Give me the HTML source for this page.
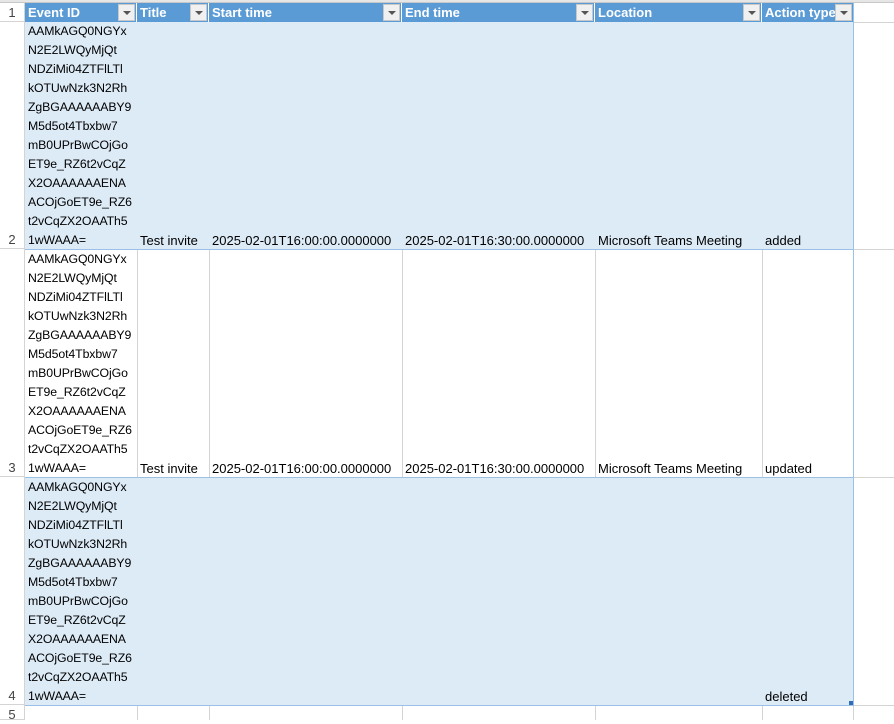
<!DOCTYPE html>
<html><head><meta charset="utf-8"><style>
body{margin:0;width:894px;height:720px;overflow:hidden;background:#fff;font-family:"Liberation Sans",sans-serif;font-size:13px;color:#000;position:relative}
.a{position:absolute;box-sizing:border-box}
.rh{left:0;width:25px;text-align:center;color:#444;background:#fff;border-right:1px solid #d4d4d4;border-bottom:1px solid #d4d4d4}
.h{background:#5b9bd5;color:#fff;font-weight:bold;top:3px;height:19px;line-height:19px;padding-left:3px;white-space:nowrap;overflow:hidden;border-right:1px solid #fff}
.fb{position:absolute;top:1px;right:1px;width:17px;height:17px;background:#f0f0f0;border:1px solid #c8c8c8;box-sizing:border-box}
.fb:after{content:"";position:absolute;left:4px;top:6px;border-left:4px solid transparent;border-right:4px solid transparent;border-top:4px solid #555}
.c{line-height:19px;padding-left:3px;white-space:nowrap;overflow:hidden}
.id{font-size:12.3px;letter-spacing:-0.1px}
.band{background:#ddebf7}
.vl{position:absolute;width:1px;background:#d4d4d4}
</style></head><body>
<div class="a" style="left:0;top:0;width:894px;height:3px;background:#e6e6e6;border-bottom:1px solid #c8c8c8"></div>
<div class="a rh" style="top:3px;height:19px;line-height:19px">1</div>
<div class="a rh" style="top:22px;height:227px;line-height:19px;padding-top:208px">2</div>
<div class="a rh" style="top:249px;height:228px;line-height:19px;padding-top:209px">3</div>
<div class="a rh" style="top:477px;height:228px;line-height:19px;padding-top:209px">4</div>
<div class="a rh" style="top:705px;height:15px;line-height:19px">5</div>
<div class="a h" style="left:25px;width:112px">Event ID<div class="fb"></div></div>
<div class="a h" style="left:137px;width:72px">Title<div class="fb"></div></div>
<div class="a h" style="left:209px;width:193px">Start time<div class="fb"></div></div>
<div class="a h" style="left:402px;width:193px">End time<div class="fb"></div></div>
<div class="a h" style="left:595px;width:167px">Location<div class="fb"></div></div>
<div class="a h" style="left:762px;width:92px">Action type<div class="fb"></div></div>
<div class="a band" style="left:25px;top:22px;width:829px;height:227px"></div>
<div class="a band" style="left:25px;top:477px;width:829px;height:228px"></div>
<div class="vl" style="left:137px;top:249px;height:228px"></div>
<div class="vl" style="left:209px;top:249px;height:228px"></div>
<div class="vl" style="left:402px;top:249px;height:228px"></div>
<div class="vl" style="left:595px;top:249px;height:228px"></div>
<div class="vl" style="left:762px;top:249px;height:228px"></div>
<div class="vl" style="left:137px;top:705px;height:15px"></div>
<div class="vl" style="left:209px;top:705px;height:15px"></div>
<div class="vl" style="left:402px;top:705px;height:15px"></div>
<div class="vl" style="left:595px;top:705px;height:15px"></div>
<div class="vl" style="left:762px;top:705px;height:15px"></div>
<div class="vl" style="left:853px;top:705px;height:15px"></div>
<div class="a" style="left:25px;top:249px;width:829px;height:1px;background:#9bc2e6"></div>
<div class="a" style="left:25px;top:477px;width:829px;height:1px;background:#9bc2e6"></div>
<div class="a" style="left:25px;top:705px;width:829px;height:1px;background:#9bc2e6"></div>
<div class="a" style="left:854px;top:22px;width:40px;height:1px;background:#d4d4d4"></div>
<div class="a" style="left:854px;top:249px;width:40px;height:1px;background:#d4d4d4"></div>
<div class="a" style="left:854px;top:477px;width:40px;height:1px;background:#d4d4d4"></div>
<div class="a" style="left:854px;top:705px;width:40px;height:1px;background:#d4d4d4"></div>
<div class="a" style="left:853px;top:3px;width:1px;height:702px;background:#9bc2e6"></div>
<div class="a" style="left:849px;top:701px;width:4px;height:4px;background:#2f6eb5"></div>

<div class="a c id" style="left:25px;top:22px;width:112px">AAMkAGQ0NGYx<br>N2E2LWQyMjQt<br>NDZiMi04ZTFlLTl<br>kOTUwNzk3N2Rh<br>ZgBGAAAAAABY9<br>M5d5ot4Tbxbw7<br>mB0UPrBwCOjGo<br>ET9e_RZ6t2vCqZ<br>X2OAAAAAAENA<br>ACOjGoET9e_RZ6<br>t2vCqZX2OAATh5<br>1wWAAA=</div>
<div class="a c" style="left:137px;top:231px;width:72px">Test invite</div>
<div class="a c" style="left:209px;top:231px;width:193px">2025-02-01T16:00:00.0000000</div>
<div class="a c" style="left:402px;top:231px;width:193px">2025-02-01T16:30:00.0000000</div>
<div class="a c" style="left:595px;top:231px;width:167px">Microsoft Teams Meeting</div>
<div class="a c" style="left:762px;top:231px;width:92px">added</div>
<div class="a c id" style="left:25px;top:250px;width:112px">AAMkAGQ0NGYx<br>N2E2LWQyMjQt<br>NDZiMi04ZTFlLTl<br>kOTUwNzk3N2Rh<br>ZgBGAAAAAABY9<br>M5d5ot4Tbxbw7<br>mB0UPrBwCOjGo<br>ET9e_RZ6t2vCqZ<br>X2OAAAAAAENA<br>ACOjGoET9e_RZ6<br>t2vCqZX2OAATh5<br>1wWAAA=</div>
<div class="a c" style="left:137px;top:459px;width:72px">Test invite</div>
<div class="a c" style="left:209px;top:459px;width:193px">2025-02-01T16:00:00.0000000</div>
<div class="a c" style="left:402px;top:459px;width:193px">2025-02-01T16:30:00.0000000</div>
<div class="a c" style="left:595px;top:459px;width:167px">Microsoft Teams Meeting</div>
<div class="a c" style="left:762px;top:459px;width:92px">updated</div>
<div class="a c id" style="left:25px;top:478px;width:112px">AAMkAGQ0NGYx<br>N2E2LWQyMjQt<br>NDZiMi04ZTFlLTl<br>kOTUwNzk3N2Rh<br>ZgBGAAAAAABY9<br>M5d5ot4Tbxbw7<br>mB0UPrBwCOjGo<br>ET9e_RZ6t2vCqZ<br>X2OAAAAAAENA<br>ACOjGoET9e_RZ6<br>t2vCqZX2OAATh5<br>1wWAAA=</div>
<div class="a c" style="left:762px;top:687px;width:92px">deleted</div>
</body></html>
